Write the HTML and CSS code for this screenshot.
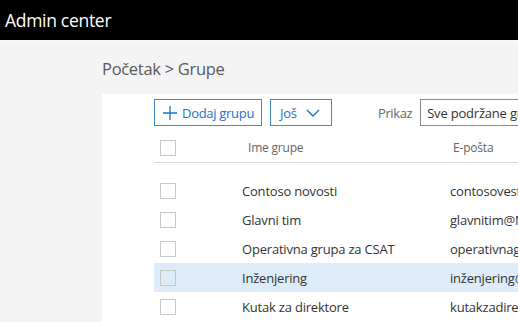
FILE: index.html
```html
<!DOCTYPE html>
<html lang="hr">
<head>
    <meta charset="UTF-8">
    <meta name="viewport" content="width=device-width, initial-scale=1.0">
    <title>Admin center | Grupe</title>
    <link rel="stylesheet" href="styles.css">
</head>
<body>
    <header class="topbar">
        <span class="app-title">Admin center</span>
    </header>

    <main class="page">
        <div class="breadcrumb">Početak &gt; Grupe</div>

        <section class="panel">
            <div class="toolbar">
                <button class="btn btn-add">
                    <svg class="icon-plus" width="14" height="14" viewBox="0 0 14 14">
                        <path d="M7 0v14M0 7h14" stroke="currentColor" stroke-width="1.3" fill="none"/>
                    </svg>
                    Dodaj grupu
                </button>
                <button class="btn btn-more">
                    Još
                    <svg class="icon-chevron" width="14" height="8" viewBox="0 0 14 8">
                        <path d="M1 1l6 6 6-6" stroke="currentColor" stroke-width="1.4" fill="none"/>
                    </svg>
                </button>
                <label class="view-label">Prikaz</label>
                <div class="view-select">Sve podržane grupe</div>
            </div>

            <div class="list-head">
                <span class="check"></span>
                <span class="col-name">Ime grupe</span>
                <span class="col-mail">E-pošta</span>
            </div>

            <div class="list-body">
                <div class="row">
                    <span class="check"></span>
                    <span class="col-name">Contoso novosti</span>
                    <span class="col-mail">contosovesti@M365x.onmicrosoft.com</span>
                </div>
                <div class="row">
                    <span class="check"></span>
                    <span class="col-name">Glavni tim</span>
                    <span class="col-mail">glavnitim@M365x.onmicrosoft.com</span>
                </div>
                <div class="row">
                    <span class="check"></span>
                    <span class="col-name">Operativna grupa za CSAT</span>
                    <span class="col-mail">operativnagrupa@M365x.onmicrosoft.com</span>
                </div>
                <div class="row selected">
                    <span class="check"></span>
                    <span class="col-name">Inženjering</span>
                    <span class="col-mail">inženjering@M365x.onmicrosoft.com</span>
                </div>
                <div class="row">
                    <span class="check"></span>
                    <span class="col-name">Kutak za direktore</span>
                    <span class="col-mail">kutakzadirektore@M365x.onmicrosoft.com</span>
                </div>
            </div>
        </section>
    </main>
</body>
</html>
```

FILE: styles.css
```css
:root {
    --blue: #1a73c7;
    --blue-border: #3c8ad0;
    --text: #333333;
    --muted: #666666;
    --line: #dadada;
    --check: #c8c8c8;
    --selected: #deecf9;
    --page-bg: #f4f4f4;
}

* {
    margin: 0;
    padding: 0;
    box-sizing: border-box;
}

html, body {
    height: 100%;
    overflow: hidden;
}

body {
    font-family: 'Open Sans', 'Noto Sans', sans-serif;
    font-size: 13px;
    color: var(--text);
    background: var(--page-bg);
    display: flex;
    flex-direction: column;
}

/* Top bar */
.topbar {
    height: 41px;
    background: #000;
    border-bottom: 1px solid #f8f8f8;
    display: flex;
    align-items: center;
    padding-left: 5px;
    flex-shrink: 0;
}

.app-title {
    color: #fff;
    font-size: 17.5px;
    letter-spacing: -0.3px;
    margin-top: -1px;
}

/* Page */
.page {
    flex: 1;
    padding-left: 102px;
    display: flex;
    flex-direction: column;
}

.breadcrumb {
    height: 53px;
    display: flex;
    align-items: center;
    font-size: 16.5px;
    color: #5a5a5a;
    letter-spacing: -0.3px;
    padding-top: 2px;
}

.panel {
    flex: 1;
    background: #fff;
    padding: 5px 0 0 52px;
    overflow: hidden;
    white-space: nowrap;
}

/* Toolbar */
.toolbar {
    display: flex;
    align-items: center;
    height: 27px;
}

.toolbar > * {
    flex-shrink: 0;
}

.btn {
    height: 27px;
    background: #fff;
    border: 1px solid var(--blue-border);
    color: var(--blue);
    font-family: inherit;
    font-size: 13px;
    display: flex;
    align-items: center;
    letter-spacing: -0.3px;
}

.btn-add {
    width: 108px;
    padding-left: 8px;
    gap: 5px;
}

.btn-more {
    width: 62px;
    margin-left: 8px;
    padding-left: 9px;
    gap: 9px;
}

.icon-chevron {
    margin-top: 1px;
}

.view-label {
    margin-left: 46px;
    color: var(--muted);
    letter-spacing: -0.4px;
}

.view-select {
    margin-left: 8px;
    height: 27px;
    border: 1px solid #8a8a8a;
    padding-left: 6px;
    display: flex;
    align-items: center;
    min-width: 140px;
    letter-spacing: -0.2px;
}

/* List */
.check {
    width: 16px;
    height: 16px;
    border: 1px solid var(--check);
    background: #fff;
    margin-left: 6px;
}

.list-head,
.row {
    display: grid;
    grid-template-columns: 88px 208px 1fr;
    align-items: center;
    letter-spacing: -0.2px;
}

.list-head {
    margin-top: 1px;
    height: 36px;
    padding-top: 6px;
    border-bottom: 1px solid var(--line);
    color: var(--muted);
    font-size: 12px;
}

.list-head .col-name {
    padding-left: 6px;
}

.list-head .col-mail {
    padding-left: 3px;
}

.list-body {
    margin-top: 13px;
}

.row {
    height: 29px;
}

.row.selected {
    background: var(--selected);
}

.row.selected .check {
    background: var(--selected);
}

.col-mail {
    overflow: hidden;
}
```
